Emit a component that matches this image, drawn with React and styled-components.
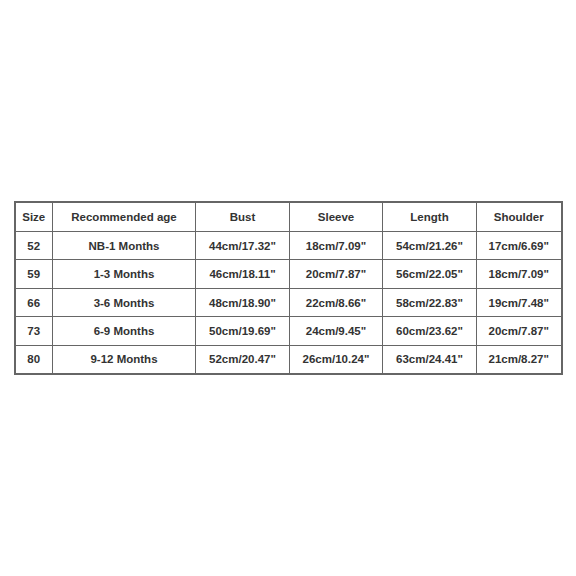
import React from 'react'
import styled, { createGlobalStyle } from 'styled-components'

const columns = [
  { title: 'Size', width: 38 },
  { title: 'Recommended age', width: 143 },
  { title: 'Bust', width: 94 },
  { title: 'Sleeve', width: 93 },
  { title: 'Length', width: 94 },
  { title: 'Shoulder', width: 85 },
]

const rows = [
  ['52', 'NB-1 Months', '44cm/17.32"', '18cm/7.09"', '54cm/21.26"', '17cm/6.69"'],
  ['59', '1-3 Months', '46cm/18.11"', '20cm/7.87"', '56cm/22.05"', '18cm/7.09"'],
  ['66', '3-6 Months', '48cm/18.90"', '22cm/8.66"', '58cm/22.83"', '19cm/7.48"'],
  ['73', '6-9 Months', '50cm/19.69"', '24cm/9.45"', '60cm/23.62"', '20cm/7.87"'],
  ['80', '9-12 Months', '52cm/20.47"', '26cm/10.24"', '63cm/24.41"', '21cm/8.27"'],
]

function App() {
  return (
    <>
      <GlobalStyle />
      <Page>
        <Table>
          <colgroup>
            {columns.map((c) => (
              <col key={c.title} style={{ width: c.width }} />
            ))}
          </colgroup>
          <thead>
            <Row $head>
              {columns.map((c) => (
                <Cell as="th" key={c.title}>{c.title}</Cell>
              ))}
            </Row>
          </thead>
          <tbody>
            {rows.map((r) => (
              <Row key={r[0]}>
                {r.map((v, i) => (
                  <Cell key={i}>{v}</Cell>
                ))}
              </Row>
            ))}
          </tbody>
        </Table>
      </Page>
    </>
  )
}

const GlobalStyle = createGlobalStyle`
  body {
    margin: 0;
    background: #fff;
    font-family: "Liberation Sans", Arial, sans-serif;
  }
`

const Page = styled.div`
  width: 576px;
  height: 576px;
  display: flex;
  align-items: center;
  justify-content: center;
  box-sizing: border-box;
`

const Table = styled.table`
  border-collapse: collapse;
  table-layout: fixed;
  width: 547px;
  border: 2px solid #666;
`

const Row = styled.tr`
  height: ${(p) => (p.$head ? '29px' : '28.5px')};
`

const Cell = styled.td`
  border: 1.5px solid #666;
  padding: 0;
  text-align: center;
  vertical-align: middle;
  font-size: 11.5px;
  font-weight: 700;
  color: #333;
  white-space: nowrap;
`

export default App
